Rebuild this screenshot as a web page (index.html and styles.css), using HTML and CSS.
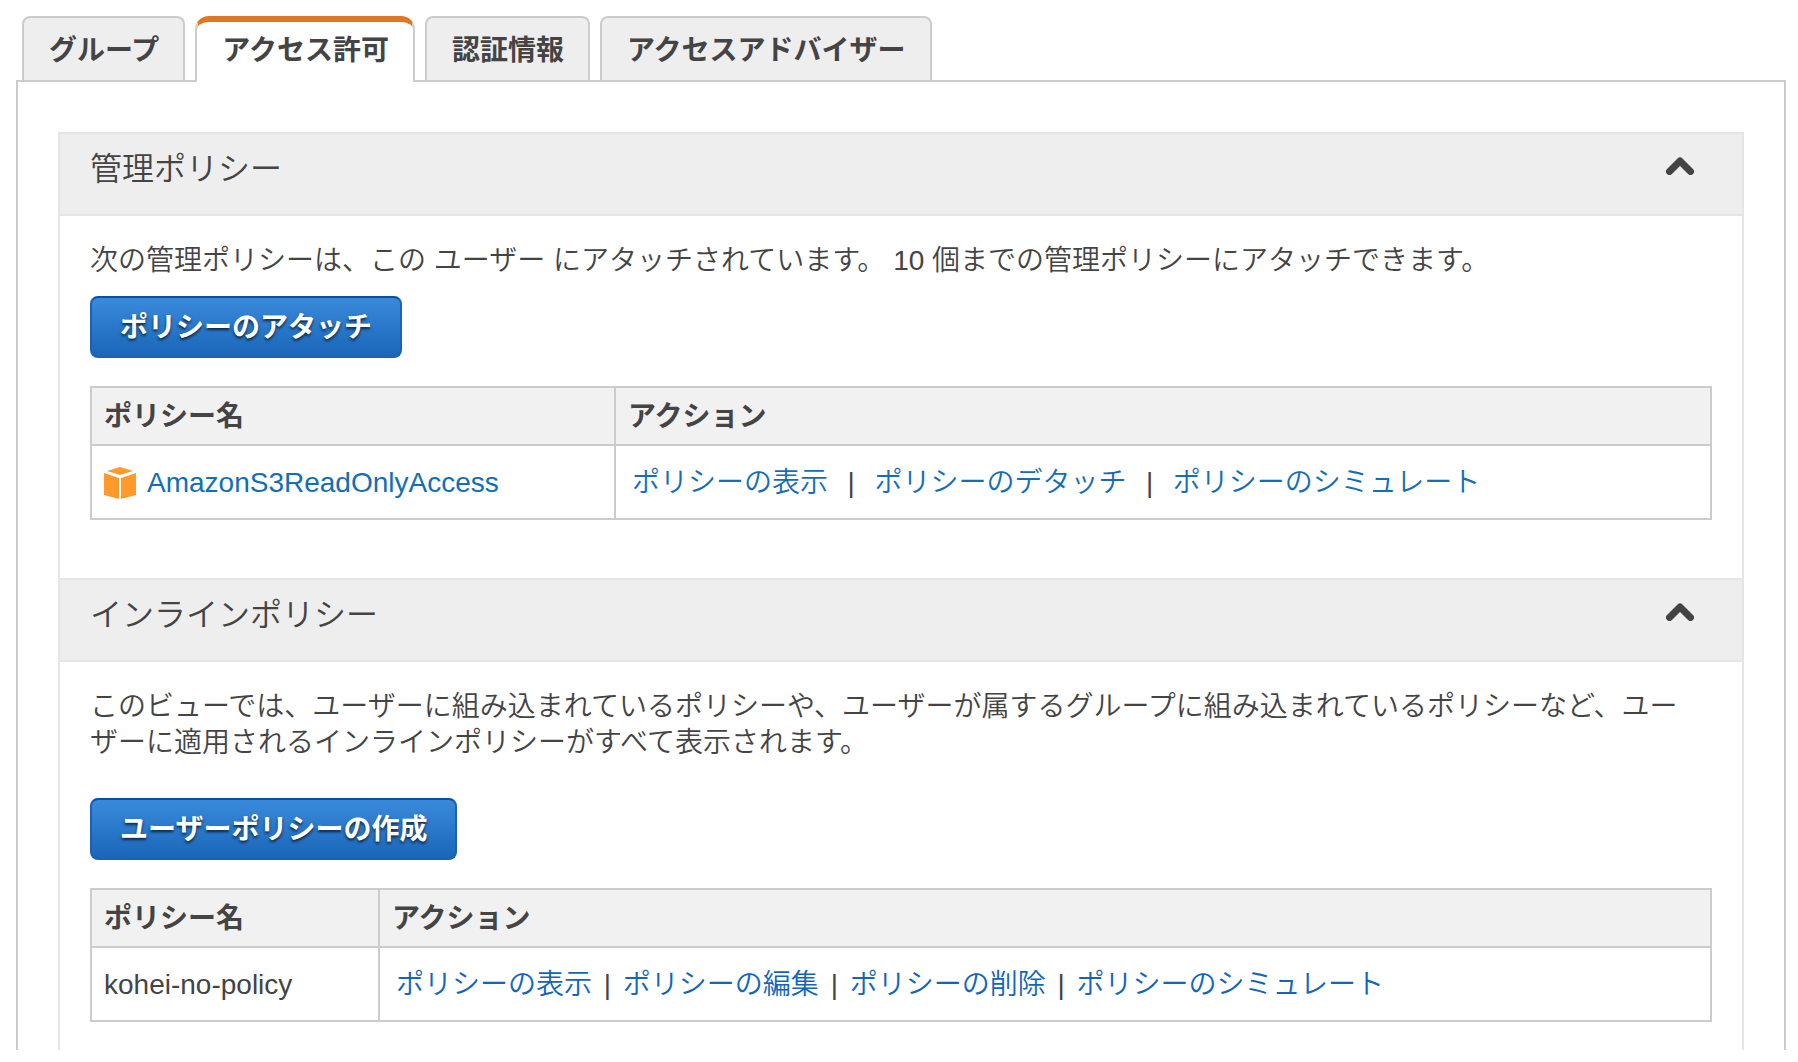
FILE: index.html
```html
<!DOCTYPE html>
<html lang="ja">
<head>
<meta charset="utf-8">
<meta name="viewport" content="width=device-width, initial-scale=1">
<title>アクセス許可</title>
<link rel="stylesheet" href="styles.css">
</head>
<body>
<nav class="tabs">
  <a class="tab" href="#groups">グループ</a>
  <a class="tab tab-active" href="#permissions" aria-current="page">アクセス許可</a>
  <a class="tab" href="#credentials">認証情報</a>
  <a class="tab" href="#advisor">アクセスアドバイザー</a>
</nav>
<main class="tab-body">
  <div class="panels">
    <section class="panel">
      <header class="panel-header">
        <h2 class="panel-title">管理ポリシー</h2>
        <button class="toggle" type="button" aria-expanded="true" aria-label="管理ポリシー">
          <svg class="chevron" viewBox="0 0 28 18" aria-hidden="true"><path d="M3.5 14.5 14 4l10.5 10.5"/></svg>
        </button>
      </header>
      <div class="panel-content">
        <p class="text">次の管理ポリシーは、この ユーザー にアタッチされています。 10 個までの管理ポリシーにアタッチできます。</p>
        <button class="button" type="button">ポリシーのアタッチ</button>
        <table class="table">
          <colgroup><col class="col-managed"><col></colgroup>
          <thead>
            <tr><th scope="col">ポリシー名</th><th scope="col">アクション</th></tr>
          </thead>
          <tbody>
            <tr>
              <td>
                <a class="policy" href="#policy">
                  <svg class="cube" viewBox="0 0 32 32" aria-hidden="true">
                    <path d="M16 0 29 4 16 8 3 4z"/>
                    <path d="M0 6 15 11V32L0 28z"/>
                    <path d="M32 6 17 11V32l15-4z"/>
                  </svg>
                  AmazonS3ReadOnlyAccess
                </a>
              </td>
              <td><a class="action" href="#show">ポリシーの表示</a>&nbsp; | &nbsp;<a class="action" href="#detach">ポリシーのデタッチ</a>&nbsp; | &nbsp;<a class="action" href="#simulate">ポリシーのシミュレート</a></td>
            </tr>
          </tbody>
        </table>
      </div>
    </section>
    <section class="panel">
      <header class="panel-header">
        <h2 class="panel-title">インラインポリシー</h2>
        <button class="toggle" type="button" aria-expanded="true" aria-label="インラインポリシー">
          <svg class="chevron" viewBox="0 0 28 18" aria-hidden="true"><path d="M3.5 14.5 14 4l10.5 10.5"/></svg>
        </button>
      </header>
      <div class="panel-content panel-content-inline">
        <p class="text text-spaced">このビューでは、ユーザーに組み込まれているポリシーや、ユーザーが属するグループに組み込まれているポリシーなど、ユーザーに適用されるインラインポリシーがすべて表示されます。</p>
        <button class="button" type="button">ユーザーポリシーの作成</button>
        <table class="table table-inline">
          <colgroup><col class="col-inline"><col></colgroup>
          <thead>
            <tr><th scope="col">ポリシー名</th><th scope="col">アクション</th></tr>
          </thead>
          <tbody>
            <tr>
              <td>kohei-no-policy</td>
              <td><a class="action" href="#show-inline">ポリシーの表示</a> | <a class="action" href="#edit-inline">ポリシーの編集</a> | <a class="action" href="#delete-inline">ポリシーの削除</a> | <a class="action" href="#simulate-inline">ポリシーのシミュレート</a></td>
            </tr>
          </tbody>
        </table>
      </div>
    </section>
  </div>
</main>
</body>
</html>
```
FILE: styles.css
```css
* {
  box-sizing: border-box;
}

body {
  margin: 0;
  padding: 16px 12px 0 16px;
  background: #fff;
  color: #444;
  font-family: "Liberation Sans", "Noto Sans CJK JP", sans-serif;
  font-size: 28px;
  line-height: 36px;
}

a {
  color: #146eb4;
  text-decoration: none;
}

a:hover {
  text-decoration: underline;
}

/* Tabs */
.tabs {
  display: flex;
  gap: 10px;
  padding-left: 6px;
}

.tab {
  height: 64px;
  padding: 15px 24px 0 25px;
  border: 2px solid #ccc;
  border-bottom: 0;
  border-radius: 8px 8px 0 0;
  background: #eee;
  color: #444;
  font-weight: bold;
  white-space: nowrap;
}

/* The open tab covers the top line of the box below it. */
.tab-active {
  z-index: 1;
  height: 66px;
  margin-bottom: -2px;
  padding-top: 11px;
  border-top: 6px solid #e07820;
  border-radius: 14px 14px 0 0;
  background: #fff;
}

.tab-body {
  padding: 50px 40px 0;
  border: 2px solid #ccc;
  border-bottom: 0;
}

/* Panels */
.panels {
  border: 2px solid #e5e5e5;
  border-width: 0 2px;
}

.panel-header {
  display: flex;
  justify-content: space-between;
  align-items: flex-start;
  padding: 15px 48px 25px 30px;
  border: 2px solid #e5e5e5;
  border-width: 2px 0;
  background: #eee;
}

.panel-title {
  margin: 0;
  font-size: 32px;
  font-weight: 350;
  line-height: 40px;
}

.toggle {
  display: flex;
  padding: 8px 0;
  border: 0;
  background: none;
  cursor: pointer;
}

.chevron {
  width: 28px;
  height: 18px;
  fill: none;
  stroke: #444;
  stroke-width: 7;
  stroke-linecap: round;
  stroke-linejoin: round;
}

.panel-content {
  padding: 27px 30px 58px;
}

.panel-content-inline {
  padding-bottom: 28px;
}

.text {
  margin: 0 0 17px;
  padding-right: 16px;
  font-weight: 350;
}

.text-spaced {
  margin-bottom: 37px;
}

.button {
  display: block;
  height: 62px;
  padding: 2px 28px 0;
  border: 2px solid #1a62b4;
  border-top-color: #0a50a0;
  border-radius: 8px;
  background: linear-gradient(#3a8adc, #1a66b8);
  color: #fff;
  font: inherit;
  font-weight: bold;
  text-shadow: 0 2px 3px rgba(0, 0, 0, 0.7);
  cursor: pointer;
}

/* Tables */
.table {
  width: 100%;
  margin-top: 28px;
  border-collapse: collapse;
  table-layout: fixed;
}

.col-managed {
  width: 524px;
}

.col-inline {
  width: 288px;
}

.table th,
.table td {
  border: 2px solid #ccc;
  text-align: left;
}

.table th {
  padding: 11px 12px 9px;
  background: #f1f1f1;
}

.table td {
  padding: 19px 12px 17px;
  font-weight: 350;
}

.action {
  padding: 0 4px;
}

.table-inline .action {
  color: #16b;
}

.policy {
  display: flex;
  align-items: center;
  gap: 11px;
}

.cube {
  width: 32px;
  height: 32px;
  fill: #ff9a2a;
}
```
